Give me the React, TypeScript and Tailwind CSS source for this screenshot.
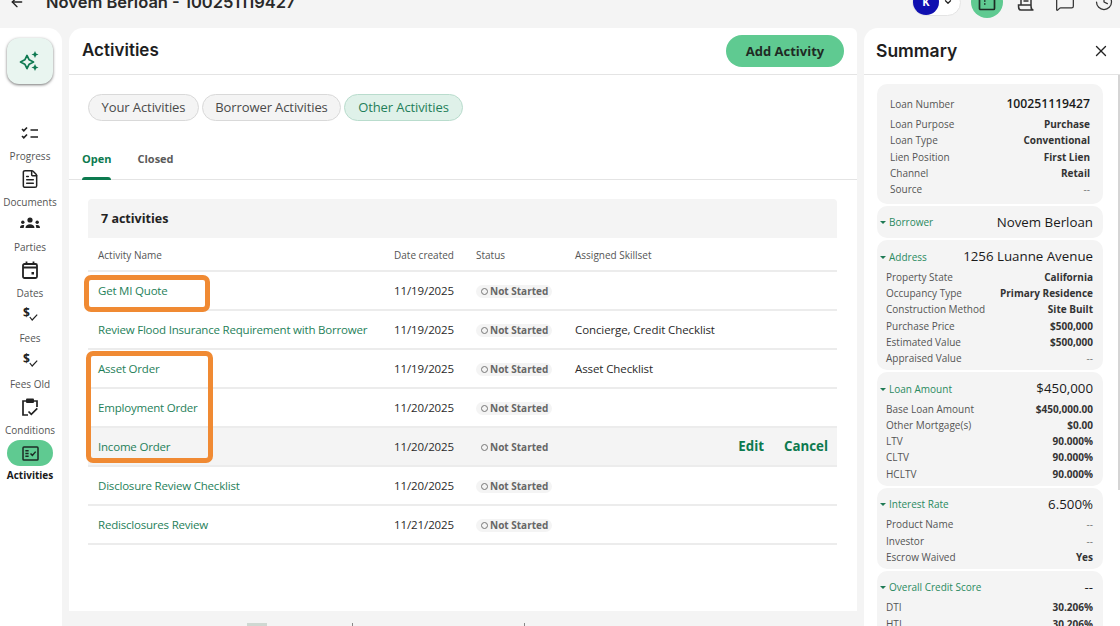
import { ArrowLeft, ChevronDown, FileText, MessageSquare, History, X } from 'lucide-react';

const body = "font-['Open_Sans','Noto_Sans',sans-serif]";
const heading = "font-['Inter','Liberation_Sans',sans-serif]";

const activities = [
  { name: 'Get MI Quote', date: '11/19/2025', skill: '' },
  { name: 'Review Flood Insurance Requirement with Borrower', date: '11/19/2025', skill: 'Concierge, Credit Checklist' },
  { name: 'Asset Order', date: '11/19/2025', skill: 'Asset Checklist' },
  { name: 'Employment Order', date: '11/20/2025', skill: '' },
  { name: 'Income Order', date: '11/20/2025', skill: '', hover: true },
  { name: 'Disclosure Review Checklist', date: '11/20/2025', skill: '' },
  { name: 'Redisclosures Review', date: '11/21/2025', skill: '' },
];

function SparkIcon() {
  return (
    <svg width="22" height="22" viewBox="0 0 22 22" fill="#0f7a52">
      <path d="M8 5.500l2.200 4.300 4.300 2.200-4.300 2.200L8 18.500l-2.200-4.300L1.500 12l4.300-2.200z" fill="none" stroke="#0f7a52" strokeWidth="1.700" strokeLinejoin="round" />
      <path d="M16 1l1.100 2.400 2.400 1.100-2.400 1.100L16 8l-1.100-2.400-2.400-1.100 2.400-1.100zM16 14l1.100 2.400 2.400 1.100-2.400 1.100L16 21l-1.100-2.400-2.400-1.100 2.400-1.100z" />
    </svg>
  );
}

function ProgressIcon() {
  return (
    <svg width="20" height="20" viewBox="0 0 20 20" fill="none" stroke="#222" strokeWidth="1.600">
      <path d="M2 6l1.800 1.800L7 4.500M2 13l1.800 1.800L7 11.500M10.500 7h7.500M10.500 14h7.500" />
    </svg>
  );
}

function PartiesIcon() {
  return (
    <svg width="22" height="20" viewBox="0 0 22 20" fill="#222">
      <circle cx="11" cy="6" r="2.600" />
      <circle cx="3.800" cy="8.200" r="1.700" />
      <circle cx="18.200" cy="8.200" r="1.700" />
      <path d="M6.500 14c0-2.600 2-3.800 4.500-3.800s4.500 1.200 4.500 3.800zM1 14c0-2 1-3 2.800-3 .8 0 1.200.2 1.500.4-.4.7-.6 1.500-.6 2.600zM21 14c0-2-1-3-2.800-3-.8 0-1.200.2-1.500.4.4.7.6 1.500.6 2.600z" />
    </svg>
  );
}

function CalendarIcon() {
  return (
    <svg width="20" height="20" viewBox="0 0 20 20" fill="none" stroke="#222" strokeWidth="1.800">
      <rect x="3" y="4" width="14" height="14" rx="1.500" />
      <path d="M3 7.500h14M6.500 1.500v3M13.500 1.500v3" />
      <rect x="11.500" y="12" width="2.500" height="2.500" fill="#222" stroke="none" />
    </svg>
  );
}

function FeesIcon() {
  return (
    <div className="relative w-[22px] h-[22px]">
      <span className={`absolute left-[4px] top-[-1px] text-[12px] font-bold leading-[20px] text-[#222] ${body}`}>$</span>
      <svg className="absolute left-[10px] top-[10px]" width="9" height="7" viewBox="0 0 9 7" fill="none" stroke="#222" strokeWidth="1.200">
        <path d="M.8 3l2.400 3L8.200.6" />
      </svg>
    </div>
  );
}

function ConditionsIcon() {
  return (
    <svg width="20" height="20" viewBox="0 0 20 20" fill="none" stroke="#222" strokeWidth="1.700">
      <path d="M6 4H3v14h5M14 4h3v6" />
      <rect x="6" y="1.500" width="8" height="4.500" rx="1" fill="#222" stroke="none" />
      <path d="M8.500 14.500l2.800 2.800 6-6" />
    </svg>
  );
}

function ActivitiesIcon() {
  return (
    <svg width="17" height="15" viewBox="0 0 18 16" fill="none" stroke="#1c2b24" strokeWidth="1.600">
      <rect x="1" y="1" width="16" height="14" rx="1" />
      <path d="M3.500 5h3.500M3.500 8h3.500M3.500 11h3.500M9 8l2 2 3.500-4" />
    </svg>
  );
}

function BookIcon() {
  return (
    <svg width="18" height="18" viewBox="0 0 18 18" fill="none" stroke="#1c2b24" strokeWidth="1.700">
      <rect x="1.500" y="1.500" width="15" height="15" rx="1" />
      <path d="M6 8h1.500M6 11h1.500" />
    </svg>
  );
}

function ReceiptIcon() {
  return (
    <svg width="20" height="20" viewBox="0 0 20 20" fill="none" stroke="#333" strokeWidth="1.500">
      <path d="M5 13V1M15 13V1M2.500 13h12.500c0 3 0 5 2.500 5H5c-2.500 0-2.500-2-2.500-5zM7.500 5h5M7.500 9h5" />
    </svg>
  );
}

const navItems = [
  { label: 'Progress', icon: <ProgressIcon /> },
  { label: 'Documents', icon: <FileText className="w-[20px] h-[20px] text-[#222]" strokeWidth={1.800} /> },
  { label: 'Parties', icon: <PartiesIcon /> },
  { label: 'Dates', icon: <CalendarIcon /> },
  { label: 'Fees', icon: <FeesIcon /> },
  { label: 'Fees Old', icon: <FeesIcon /> },
  { label: 'Conditions', icon: <ConditionsIcon /> },
];

function Row({ label, value, strong = true }: { label: string; value: string; strong?: boolean }) {
  return (
    <div className="flex items-center justify-between h-[16.300px] text-[10px] leading-none">
      <span className="text-[#555]">{label}</span>
      <span className={strong ? 'font-bold text-[#333]' : 'text-[#777]'}>{value}</span>
    </div>
  );
}

function SectionHead({ label, value }: { label: string; value: string }) {
  return (
    <div className="flex items-center justify-between h-[18px] pl-[3px] pr-[10px]">
      <span className="flex items-center gap-[3px] text-[10px] text-[#2a8a5f]">
        <span className="w-0 h-0 border-x-[3px] border-x-transparent border-t-[3px] border-t-[#1f7a55]" />
        {label}
      </span>
      <span className="text-[13.300px] font-medium text-[#1a1a1a]">{value}</span>
    </div>
  );
}

function Section({ label, value, rows }: { label: string; value: string; rows?: [string, string, boolean?][] }) {
  return (
    <div className={`bg-[#f4f4f4] rounded-[10px] pt-[8px] ${rows ? 'pb-[3.800px]' : 'pb-[6.200px]'}`}>
      <SectionHead label={label} value={value} />
      {rows && (
        <div className="pl-[9px] pr-[10px] pt-[2.350px]">
          {rows.map(([l, v, s]) => (
            <Row key={l} label={l} value={v} strong={s !== false} />
          ))}
        </div>
      )}
    </div>
  );
}

export default function App() {
  return (
    <div className={`w-[1120px] h-[626px] overflow-hidden flex flex-col bg-[#f4f4f4] ${body}`}>
      {/* top bar, cut off by the screenshot */}
      <div className="h-[28px] shrink-0 overflow-hidden">
        <div className="-mt-[22px] h-[48px] flex items-center justify-between pl-[9px] pr-[6px]">
          <div className="flex items-center gap-[21px]">
            <ArrowLeft className="w-[16px] h-[16px] text-[#222]" />
            <span className={`text-[16.500px] font-semibold text-[#2a2a2a] ${heading}`}>Novem Berloan - 100251119427</span>
          </div>
          <div className="flex items-center">
            <div className="flex items-center w-[49px] h-[27px] rounded-full bg-white border border-[#e4e4e4]">
              <div className="w-[26px] h-[26px] rounded-full bg-[#1010b0] text-white text-[11px] font-bold flex items-center justify-center">K</div>
              <ChevronDown className="ml-[4px] w-[10px] h-[10px] text-[#222]" strokeWidth={3} />
            </div>
            <div className="ml-[10px] w-[32px] h-[32px] rounded-full bg-[#5fca91] flex items-center justify-center">
              <BookIcon />
            </div>
            <div className="ml-[13px]"><ReceiptIcon /></div>
            <MessageSquare className="ml-[19px] w-[20px] h-[20px] text-[#333]" strokeWidth={1.500} />
            <History className="ml-[19px] w-[20px] h-[20px] text-[#333]" strokeWidth={1.500} />
          </div>
        </div>
      </div>

      <div className="flex-1 flex min-h-0 gap-[7px]">
        {/* left nav */}
        <div className="w-[62px] bg-white rounded-tr-[14px] flex flex-col items-center pt-[10px] pr-[2px]">
          <div className="w-[46px] h-[46px] rounded-[12px] bg-[#e9f5f0] shadow-[0_1px_3px_rgba(0,0,0,0.550)] flex items-center justify-center">
            <SparkIcon />
          </div>
          <div className="mt-[37px] flex flex-col items-center">
            {navItems.map((item) => (
              <div key={item.label} className="h-[45.600px] flex flex-col items-center justify-between pb-[3.500px]">
                <div className="h-[24px] flex items-center justify-center">{item.icon}</div>
                <span className="text-[10px] leading-[14px] text-[#555]">{item.label}</span>
              </div>
            ))}
            <div className="w-[46px] h-[26px] rounded-full bg-[#5fca91] flex items-center justify-center">
              <ActivitiesIcon />
            </div>
            <span className="mt-[2px] text-[10px] leading-[14px] font-bold text-[#1a1a1a]">Activities</span>
          </div>
        </div>

        {/* main column */}
        <div className="w-[788px] flex flex-col">
          <div className="h-[583px] shrink-0 bg-white rounded-tl-[14px] rounded-tr-[6px] flex flex-col">
            <div className="h-[47px] shrink-0 border-b border-[#e4e4e4] flex items-center justify-between px-[13px]">
              <h1 className={`text-[17px] font-semibold text-[#1e1e1e] ${heading}`}>Activities</h1>
              <button className="w-[118px] h-[32px] pt-[1px] rounded-full bg-[#5fca91] text-[13px] font-bold text-[#1f2a24]">Add Activity</button>
            </div>

            <div className="pl-[19px] pt-[19px] flex gap-[3px] text-[13px] tracking-[-0.100px]">
              <span className="h-[27px] w-[111px] flex items-center justify-center rounded-full bg-[#f4f4f4] border border-[#d9d9d9] text-[#4a4a4a]">Your Activities</span>
              <span className="h-[27px] w-[139px] flex items-center justify-center rounded-full bg-[#f4f4f4] border border-[#d9d9d9] text-[#4a4a4a]">Borrower Activities</span>
              <span className="h-[27px] w-[119px] flex items-center justify-center rounded-full bg-[#dff1e9] border border-[#b9dccd] text-[#1f7f5a]">Other Activities</span>
            </div>

            <div className="mt-[24px] h-[35px] shrink-0 border-b border-[#e4e4e4] flex items-start gap-[26px] pl-[13px] text-[11px] font-bold">
              <span className="relative h-[34px] pt-[6px] text-[#0c7a4f]">
                Open
                <span className="absolute left-0 right-0 bottom-[-1px] h-[3px] rounded-t bg-[#0c7a4f]" />
              </span>
              <span className="pt-[6px] text-[#5a5a5a]">Closed</span>
            </div>

            {/* table */}
            <div className="relative mt-[19px] ml-[19px] w-[749px]">
              <div className="h-[39px] pt-[2px] bg-[#f4f4f4] rounded-t-[4px] flex items-center pl-[13px] text-[12.500px] font-bold text-[#222]">7 activities</div>
              <div className="h-[34px] pt-[2px] flex items-center border-b-2 border-[#ececec] text-[10px] text-[#555]">
                <span className="w-[306px] pl-[10px]">Activity Name</span>
                <span className="w-[82px]">Date created</span>
                <span className="w-[99px]">Status</span>
                <span>Assigned Skillset</span>
              </div>
              {activities.map((a) => (
                <div key={a.name} className={`h-[39px] flex items-center border-b-2 border-[#ececec] text-[11.500px] tracking-[-0.100px] ${a.hover ? 'bg-[#f4f4f4]' : ''}`}>
                  <span className="w-[306px] pl-[10px] text-[#1f7f5a] tracking-[-0.200px]">{a.name}</span>
                  <span className="w-[82px] text-[#2a2a2a]">{a.date}</span>
                  <span className="w-[99px]">
                    <span className={`inline-flex items-center h-[13px] w-[76px] rounded-full pl-[5px] gap-[2px] text-[10px] font-bold text-[#666] tracking-normal ${a.hover ? '' : 'bg-[#f4f4f4]'}`}>
                      <span className="w-[7px] h-[7px] rounded-full border border-[#777]" />
                      Not Started
                    </span>
                  </span>
                  <span className="flex-1 text-[#2a2a2a]">{a.skill}</span>
                  {a.hover && (
                    <span className="flex gap-[20px] pr-[9px] text-[13.300px] font-bold text-[#0c7a4f] tracking-normal">
                      <span>Edit</span>
                      <span>Cancel</span>
                    </span>
                  )}
                </div>
              ))}

              {/* orange annotation boxes */}
              <div className="absolute left-[-4px] top-[76px] w-[126px] h-[37px] rounded-[7px] border-[5px] border-[#f08a33]" />
              <div className="absolute left-[-2px] top-[152px] w-[127px] h-[112px] rounded-[7px] border-[5px] border-[#f08a33]" />
            </div>
          </div>
          {/* footer peeking in at the bottom edge */}
          <div className="flex pt-[12px] pl-[178px]">
            <span className="w-[20px] h-[3px] bg-[#cfd8d2]" />
            <span className="ml-[85px] w-[1px] h-[3px] bg-[#888]" />
            <span className="ml-[171px] w-[1px] h-[3px] bg-[#888]" />
          </div>
        </div>

        {/* summary */}
        <div className="flex-1 bg-white rounded-tl-[14px] flex flex-col min-h-0 relative">
          <div className="h-[47px] shrink-0 border-b border-[#e4e4e4] flex items-center justify-between pl-[12px] pr-[10px]">
            <h2 className={`text-[17.500px] font-semibold text-[#1e1e1e] ${heading}`}>Summary</h2>
            <X className="w-[18px] h-[18px] text-[#222]" strokeWidth={1.800} />
          </div>
          <div className="absolute right-0 top-[47px] w-[2px] h-[415px] bg-[#d5d5d5]" />
          <div className="pt-[9px] pl-[13px] w-[239px] flex flex-col gap-[2px]">
            <div className="bg-[#f4f4f4] rounded-[10px] px-[13px] pt-[10px] pb-[6.500px]">
              <div className="flex items-center justify-between h-[20px] mb-[2px] text-[10px] text-[#555]">
                <span>Loan Number</span>
                <span className="text-[12.200px] font-semibold text-[#1a1a1a]">100251119427</span>
              </div>
              <Row label="Loan Purpose" value="Purchase" />
              <Row label="Loan Type" value="Conventional" />
              <Row label="Lien Position" value="First Lien" />
              <Row label="Channel" value="Retail" />
              <Row label="Source" value="--" strong={false} />
            </div>
            <Section label="Borrower" value="Novem Berloan" />
            <Section
              label="Address"
              value="1256 Luanne Avenue"
              rows={[
                ['Property State', 'California'],
                ['Occupancy Type', 'Primary Residence'],
                ['Construction Method', 'Site Built'],
                ['Purchase Price', '$500,000'],
                ['Estimated Value', '$500,000'],
                ['Appraised Value', '--', false],
              ]}
            />
            <Section
              label="Loan Amount"
              value="$450,000"
              rows={[
                ['Base Loan Amount', '$450,000.00'],
                ['Other Mortgage(s)', '$0.00'],
                ['LTV', '90.000%'],
                ['CLTV', '90.000%'],
                ['HCLTV', '90.000%'],
              ]}
            />
            <Section
              label="Interest Rate"
              value="6.500%"
              rows={[
                ['Product Name', '--', false],
                ['Investor', '--', false],
                ['Escrow Waived', 'Yes'],
              ]}
            />
            <Section
              label="Overall Credit Score"
              value="--"
              rows={[
                ['DTI', '30.206%'],
                ['HTI', '30.206%'],
              ]}
            />
          </div>
        </div>
      </div>
    </div>
  );
}
